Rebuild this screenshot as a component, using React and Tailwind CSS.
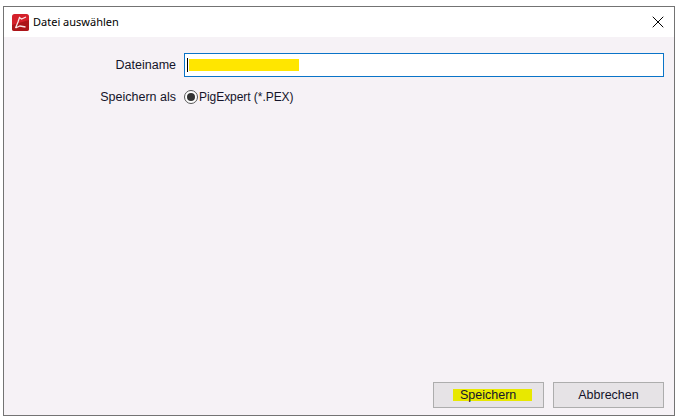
import { X } from "lucide-react";

const font = { fontFamily: '"Liberation Sans", Arial, sans-serif' };

const AppIcon = () => (
  <svg width="17" height="17" viewBox="0 0 17 17" className="shrink-0">
    <rect x="0" y="0" width="17" height="17" rx="2.5" fill="#d4202a" />
    <path d="M0 11 L17 6 V14.5 a2.5 2.5 0 0 1 -2.5 2.5 H2.5 A2.5 2.5 0 0 1 0 14.5 Z" fill="#ab1519" />
    <path d="M3.5 14 L6 8 L7.5 3.5 L9.5 5 L14 3 M3.5 14 L8 12 L13.5 13" stroke="#fbe6e6" strokeWidth="1.3" fill="none" />
  </svg>
);

export default function App() {
  return (
    <div className="w-[678px] h-[418px] bg-white pt-[6px] pl-[3px] pr-[3px] pb-[2px]">
      <div className="w-full h-full flex flex-col border border-[#737373] bg-[#f6f2f6]">
        {/* Title bar */}
        <div className="h-[30px] shrink-0 bg-white flex items-center pl-[8px] pr-[6px]">
          <AppIcon />
          <span className="ml-[4px] text-[11px] text-black" style={{ fontFamily: '"Noto Sans", sans-serif' }}>Datei auswählen</span>
          <X className="ml-auto w-[20px] h-[20px] text-black" strokeWidth={1.2} />
        </div>

        {/* Form */}
        <div className="flex-1 flex flex-col pt-[16px] pl-[180px] pr-[10px] pb-[7px] text-[12.5px] text-[#14142a]" style={font}>
          <div className="flex items-center h-[24px]">
            <label className="w-[172px] -ml-[180px] text-right shrink-0">Dateiname</label>
            <div className="ml-[8px] flex-1 h-[24px] border border-[#0a74c8] bg-white flex items-center pl-[2px]">
              <div className="w-px h-[14px] bg-black" />
              <div className="ml-px w-[110px] h-[12px] bg-[#ffe600]" />
            </div>
          </div>

          <div className="flex items-center h-[16px] mt-[12px]">
            <label className="w-[172px] -ml-[180px] text-right shrink-0">Speichern als</label>
            <div className="ml-[8px] w-[14px] h-[14px] rounded-full border border-[#555] bg-white flex items-center justify-center shrink-0">
              <div className="w-[8px] h-[8px] rounded-full bg-[#333]" />
            </div>
            <span className="ml-px text-[12px] tracking-[-0.05px]">PigExpert (*.PEX)</span>
          </div>

          {/* Buttons */}
          <div className="mt-auto flex justify-end gap-[9px]">
            <button className="w-[111px] h-[26px] border border-[#adadad] bg-[#e6e3e6] flex items-center pl-[19px]">
              <span className="w-[79px] h-[12px] leading-[12px] bg-[#e8e800] text-left pl-[7px]">Speichern</span>
            </button>
            <button className="w-[111px] h-[26px] border border-[#adadad] bg-[#e6e3e6] flex items-center justify-center">
              Abbrechen
            </button>
          </div>
        </div>
      </div>
    </div>
  );
}
